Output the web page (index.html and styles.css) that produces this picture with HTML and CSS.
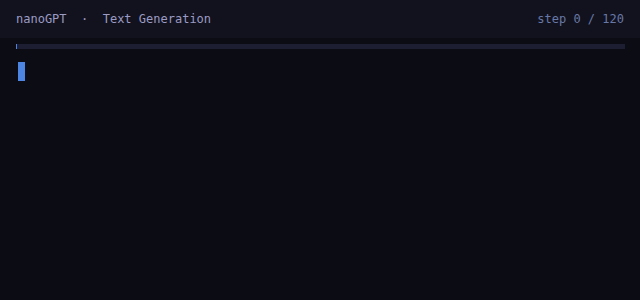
FILE: index.html
```html
<!DOCTYPE html>
<html>
<head>
<meta charset="utf-8">
<link rel="stylesheet" href="styles.css">
</head>
<body>
<header class="top">
  <div class="title">nanoGPT  ·  Text Generation</div>
  <div class="step">step 0 / 120</div>
</header>
<main class="content">
  <div class="track"><div class="fill" style="width:1px"></div></div>
  <div class="output"><span class="cursor"></span></div>
</main>
</body>
</html>
```

FILE: styles.css
```css
html, body {
  margin: 0;
  padding: 0;
  background: #0b0c14;
  height: 100%;
}
body {
  font-family: "DejaVu Sans Mono", monospace;
  font-size: 12px;
}
.top {
  height: 38px;
  background: #12121e;
  display: flex;
  align-items: center;
  justify-content: space-between;
  padding: 0 16px;
  box-sizing: border-box;
}
.title {
  color: #9b9bc3;
  white-space: pre;
}
.step {
  color: #6878a6;
}
.content {
  padding: 6px 15px 0 16px;
}
.track {
  height: 5px;
  background: #1e1e32;
}
.fill {
  height: 100%;
  background: #4a82e4;
}
.output {
  padding: 13px 2px;
}
.cursor {
  display: block;
  width: 7px;
  height: 19px;
  background: #4d86e2;
}
```
